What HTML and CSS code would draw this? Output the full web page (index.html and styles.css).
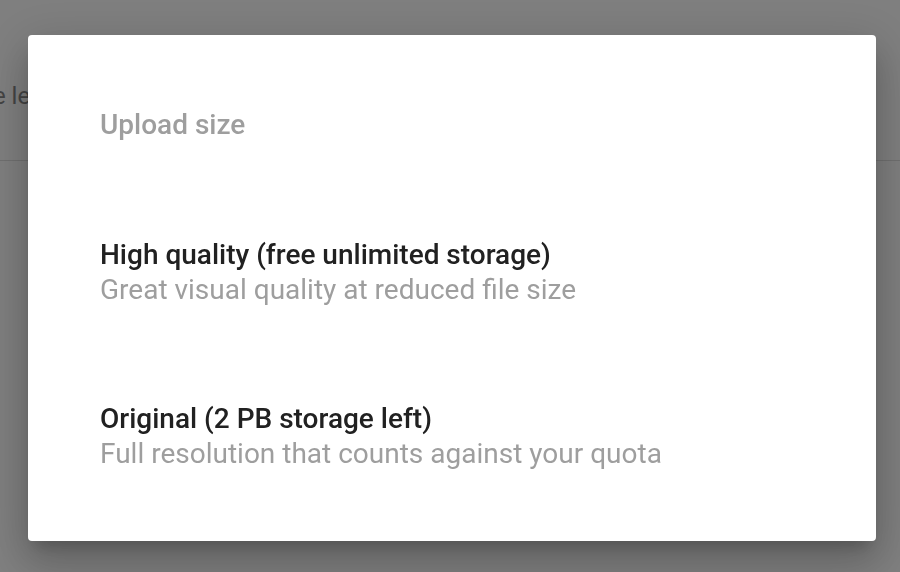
FILE: index.html
```html
<!DOCTYPE html>
<html lang="en">
<head>
<meta charset="utf-8">
<title>Upload size</title>
<link rel="stylesheet" href="styles.css">
</head>
<body>
<div class="page">
  <div class="page-row">
    <span class="page-label">storage left</span>
  </div>
</div>
<div class="overlay">
  <div class="dialog" role="dialog" aria-labelledby="dlg-title">
    <h2 class="dialog-title" id="dlg-title">Upload size</h2>
    <div class="option">
      <div class="option-title">High quality (free unlimited storage)</div>
      <div class="option-sub">Great visual quality at reduced file size</div>
    </div>
    <div class="option">
      <div class="option-title">Original (2 PB storage left)</div>
      <div class="option-sub">Full resolution that counts against your quota</div>
    </div>
  </div>
</div>
</body>
</html>
```

FILE: styles.css
```css
html, body {
  margin: 0;
  padding: 0;
  height: 100%;
  background: #ffffff;
  font-family: Roboto, "Noto Sans", "Liberation Sans", sans-serif;
}

.page {
  height: 100%;
  overflow: hidden;
}

.page-row {
  height: 160px;
  border-bottom: 1px solid #e0e0e0;
  display: flex;
  align-items: flex-start;
}

.page-label {
  margin-left: -75px;
  margin-top: 81px;
  font-size: 24px;
  line-height: 30px;
  color: #888888;
  white-space: nowrap;
}

.overlay {
  position: fixed;
  inset: 0;
  background: rgba(0, 0, 0, 0.5);
  display: flex;
  align-items: flex-start;
  justify-content: flex-start;
  padding: 35px 0 0 28px;
  box-sizing: border-box;
}

.dialog {
  width: 848px;
  box-sizing: border-box;
  background: #ffffff;
  border-radius: 4px;
  padding: 74px 72px 23px;
  box-shadow:
    0 24px 38px 3px rgba(0, 0, 0, 0.14),
    0 9px 46px 8px rgba(0, 0, 0, 0.12),
    0 11px 15px -7px rgba(0, 0, 0, 0.2);
}

.dialog-title {
  margin: 0;
  padding-bottom: 49px;
  font-size: 28px;
  line-height: 32px;
  font-weight: 500;
  color: #9e9e9e;
}

.option {
  padding: 47px 0;
}

.option-title {
  font-size: 28px;
  line-height: 35px;
  font-weight: 500;
  color: #212121;
}

.option-sub {
  font-size: 28px;
  line-height: 35px;
  font-weight: 400;
  color: #9e9e9e;
}
```
